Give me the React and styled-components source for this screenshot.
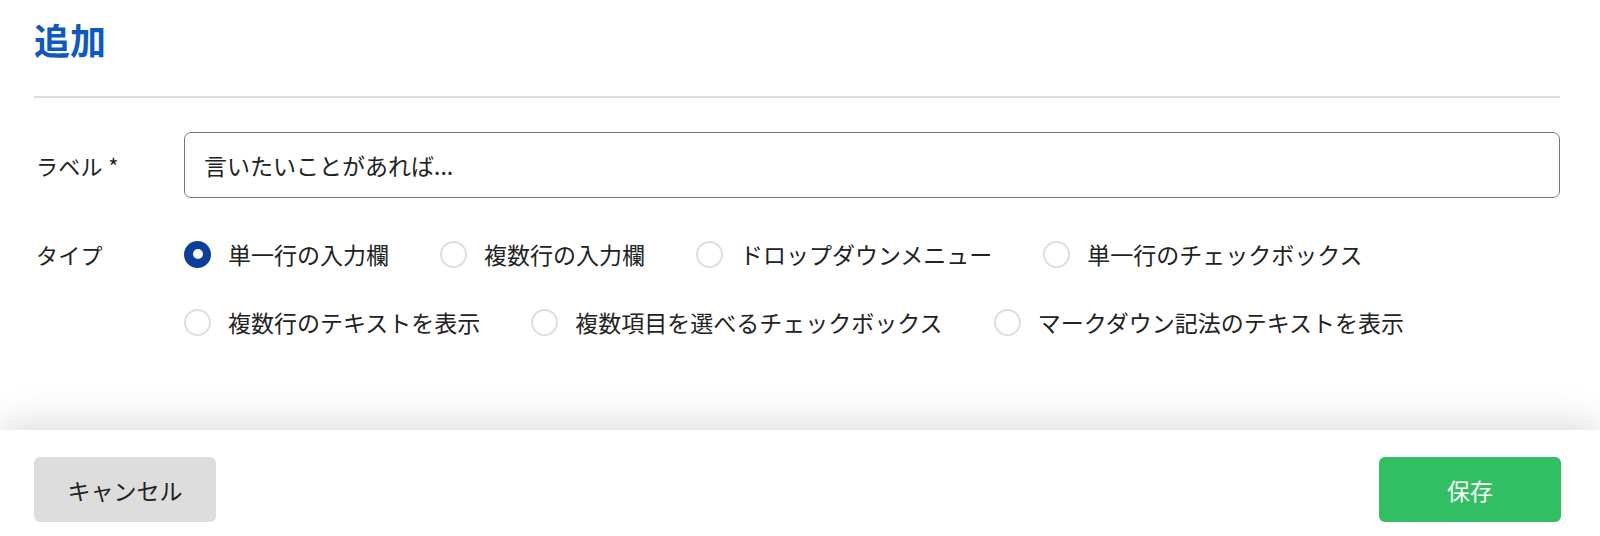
import React, { useState } from "react";
import styled, { createGlobalStyle } from "styled-components";

const GlobalStyle = createGlobalStyle`
  html, body {
    margin: 0;
    padding: 0;
    background: #fff;
    font-family: "Noto Sans CJK JP", "Noto Sans", sans-serif;
    color: #222;
  }
`;

const Page = styled.div`
  height: 536px;
  display: flex;
  flex-direction: column;
  overflow: hidden;
`;

const Main = styled.div`
  flex: 1;
  padding: 14px 40px 0 34px;
`;

const Title = styled.h1`
  margin: 0;
  font-size: 36px;
  line-height: 50px;
  font-weight: 700;
  color: #0b58c6;
`;

const Divider = styled.hr`
  margin: 32px 0 0;
  border: none;
  border-top: 2px solid #dddddd;
`;

const FieldRow = styled.div`
  display: grid;
  grid-template-columns: 150px 1fr;
  align-items: ${(p) => p.$align || "center"};
  margin-top: ${(p) => p.$top}px;
`;

const Label = styled.label`
  font-size: 22px;
  line-height: 32px;
  padding-left: 2px;
  letter-spacing: 0.3px;
`;

const TextInput = styled.input`
  box-sizing: border-box;
  width: 100%;
  height: 66px;
  border: 1.5px solid #777;
  border-radius: 7px;
  padding: 0 19px;
  font-family: inherit;
  font-size: 23px;
  color: #222;
  outline: none;
  &::placeholder {
    color: #222;
  }
`;

const Options = styled.div`
  display: flex;
  flex-wrap: wrap;
  column-gap: 51px;
  row-gap: 36px;
`;

const Option = styled.label`
  display: flex;
  align-items: center;
  gap: 17px;
  font-size: 23px;
  line-height: 32px;
  cursor: pointer;
`;

const RadioDot = styled.span`
  box-sizing: border-box;
  width: 27px;
  height: 27px;
  border-radius: 50%;
  flex-shrink: 0;
  background: ${(p) => (p.$checked ? "#0b3f9b" : "#fff")};
  border: ${(p) => (p.$checked ? "none" : "2px solid #dedede")};
  display: flex;
  align-items: center;
  justify-content: center;
  &::after {
    content: "";
    display: ${(p) => (p.$checked ? "block" : "none")};
    width: 10px;
    height: 10px;
    border-radius: 50%;
    background: #fff;
  }
`;

const Footer = styled.div`
  display: flex;
  justify-content: space-between;
  padding: 27px 39px 14px 34px;
  background: #fff;
  box-shadow: 0 -4px 40px rgba(0, 0, 0, 0.16);
  position: relative;
`;

const Button = styled.button`
  width: 182px;
  height: 65px;
  border: none;
  border-radius: 6px;
  font-family: inherit;
  font-size: 23px;
  cursor: pointer;
  background: ${(p) => (p.$primary ? "#32bf64" : "#dddddd")};
  color: ${(p) => (p.$primary ? "#fff" : "#222")};
`;

const types = [
  "単一行の入力欄",
  "複数行の入力欄",
  "ドロップダウンメニュー",
  "単一行のチェックボックス",
  "複数行のテキストを表示",
  "複数項目を選べるチェックボックス",
  "マークダウン記法のテキストを表示",
];

export default function App() {
  const [selected, setSelected] = useState(0);

  return (
    <Page>
      <GlobalStyle />
      <Main>
        <Title>追加</Title>
        <Divider />
        <FieldRow $top={34}>
          <Label>ラベル *</Label>
          <TextInput placeholder="言いたいことがあれば..." />
        </FieldRow>
        <FieldRow $top={40} $align="start">
          <Label>タイプ</Label>
          <Options>
            {types.map((t, i) => (
              <Option key={i} onClick={() => setSelected(i)}>
                <RadioDot $checked={selected === i} />
                {t}
              </Option>
            ))}
          </Options>
        </FieldRow>
      </Main>
      <Footer>
        <Button>キャンセル</Button>
        <Button $primary>保存</Button>
      </Footer>
    </Page>
  );
}
